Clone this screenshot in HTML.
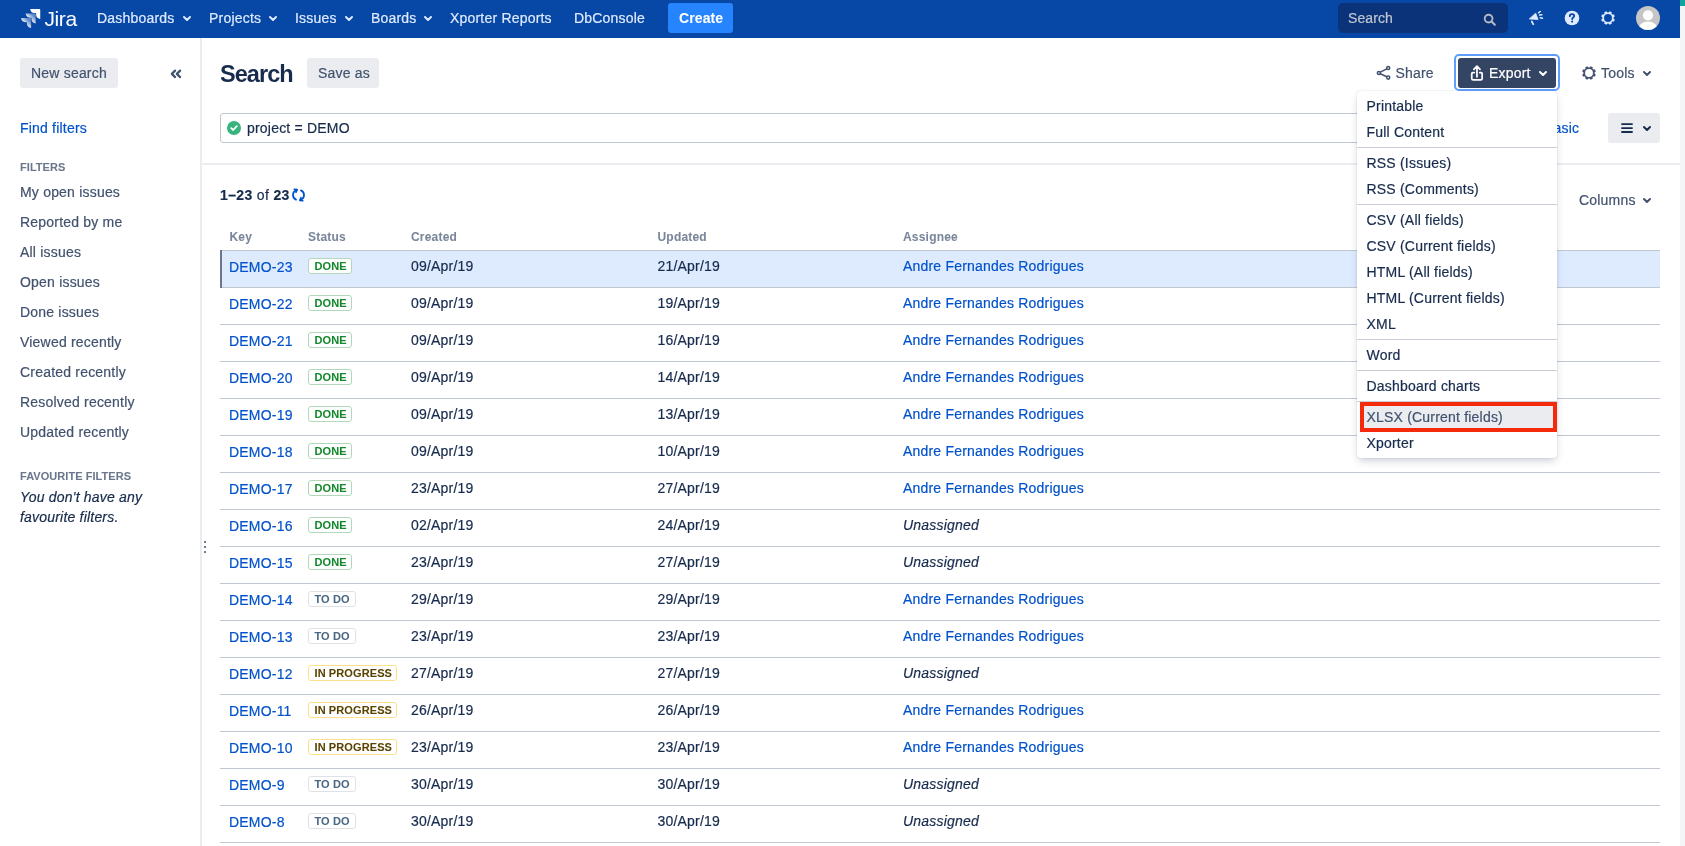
<!DOCTYPE html>
<html><head><meta charset="utf-8">
<style>
*{box-sizing:border-box;margin:0;padding:0}
html,body{width:1685px;height:846px;overflow:hidden;background:#fff}
body{font-family:"Liberation Sans",sans-serif;font-size:14px;color:#172b4d;position:relative}
.a{position:absolute;white-space:nowrap;line-height:16px}
#root{position:absolute;left:0;top:0;width:1685px;height:846px;will-change:transform;-webkit-text-stroke:0.2px currentColor}
svg.a{line-height:0;display:block}
b{font-weight:bold}
</style></head><body><div id="root">
<div class="a" style="left:0px;top:0px;width:1680px;height:38px;background:#0747a6;"></div>
<div class="a" style="left:1680px;top:0px;width:5px;height:846px;background:#f4f5f7;"></div>
<div class="a" style="left:1680px;top:0px;width:5px;height:6px;background:#12a39c;"></div>
<svg class="a" style="left:18.6px;top:5.9px" width="23.7" height="23.7" viewBox="0 0 32 32">
<defs><linearGradient id="lg1" x1="0.9" y1="0.1" x2="0.35" y2="0.65"><stop offset="0.2" stop-color="#fff" stop-opacity="0.35"/><stop offset="1" stop-color="#fff"/></linearGradient></defs>
<path d="M27.6 4H15.2c0 3.1 2.5 5.6 5.6 5.6h2.3v2.2c0 3.1 2.5 5.6 5.6 5.6V5.1c0-.6-.5-1.1-1.1-1.1z" fill="#fff"/>
<path d="M21.5 10.2H9.1c0 3.1 2.5 5.6 5.6 5.6H17V18c0 3.1 2.5 5.6 5.6 5.6V11.3c0-.6-.5-1.1-1.1-1.1z" fill="url(#lg1)"/>
<path d="M15.3 16.3H2.9c0 3.1 2.5 5.6 5.6 5.6h2.3v2.2c0 3.1 2.5 5.6 5.6 5.6V17.4c0-.6-.5-1.1-1.1-1.1z" fill="url(#lg1)"/>
</svg>
<div class="a" style="left:44.5px;top:7px;font-size:21px;line-height:24px;color:#fff;letter-spacing:-0.4px;-webkit-text-stroke:0">Jira</div>
<div class="a" style="left:97px;top:10px;font-size:14px;color:#deebff;font-weight:normal;font-style:normal;letter-spacing:0.2px;">Dashboards</div>
<div class="a" style="left:209px;top:10px;font-size:14px;color:#deebff;font-weight:normal;font-style:normal;letter-spacing:0.2px;">Projects</div>
<div class="a" style="left:295px;top:10px;font-size:14px;color:#deebff;font-weight:normal;font-style:normal;letter-spacing:0.2px;">Issues</div>
<div class="a" style="left:371px;top:10px;font-size:14px;color:#deebff;font-weight:normal;font-style:normal;letter-spacing:0.2px;">Boards</div>
<div class="a" style="left:450px;top:10px;font-size:14px;color:#deebff;font-weight:normal;font-style:normal;letter-spacing:0.2px;">Xporter Reports</div>
<div class="a" style="left:574px;top:10px;font-size:14px;color:#deebff;font-weight:normal;font-style:normal;letter-spacing:0.2px;">DbConsole</div>
<svg class="a" style="left:182px;top:14.5px" width="10" height="7" viewBox="-1 -1 10 7"><path d="M1.0 1.0 L4.0 4.0 L7.0 1.0" fill="none" stroke="#deebff" stroke-width="2" stroke-linecap="round" stroke-linejoin="round"/></svg>
<svg class="a" style="left:268px;top:14.5px" width="10" height="7" viewBox="-1 -1 10 7"><path d="M1.0 1.0 L4.0 4.0 L7.0 1.0" fill="none" stroke="#deebff" stroke-width="2" stroke-linecap="round" stroke-linejoin="round"/></svg>
<svg class="a" style="left:344px;top:14.5px" width="10" height="7" viewBox="-1 -1 10 7"><path d="M1.0 1.0 L4.0 4.0 L7.0 1.0" fill="none" stroke="#deebff" stroke-width="2" stroke-linecap="round" stroke-linejoin="round"/></svg>
<svg class="a" style="left:423px;top:14.5px" width="10" height="7" viewBox="-1 -1 10 7"><path d="M1.0 1.0 L4.0 4.0 L7.0 1.0" fill="none" stroke="#deebff" stroke-width="2" stroke-linecap="round" stroke-linejoin="round"/></svg>
<div class="a" style="left:668px;top:3px;width:65px;height:30px;background:#2684ff;border-radius:3px"></div>
<div class="a" style="left:679px;top:10px;font-size:14px;color:#fff;font-weight:bold;font-style:normal;letter-spacing:0.1px;-webkit-text-stroke:0.05px currentColor;">Create</div>
<div class="a" style="left:1338px;top:3px;width:170px;height:30px;background:#0a337a;border-radius:5px"></div>
<div class="a" style="left:1348px;top:10px;font-size:14px;color:#c1c7d0;font-weight:normal;font-style:normal;letter-spacing:0.1px;">Search</div>
<svg class="a" style="left:1483px;top:13px" width="14" height="14" viewBox="0 0 14 14"><circle cx="5.6" cy="5.6" r="3.9" fill="none" stroke="#b3bac5" stroke-width="1.9"/><path d="M8.5 8.5 L11.8 11.8" stroke="#b3bac5" stroke-width="2.1" stroke-linecap="round"/></svg>
<svg class="a" style="left:1526px;top:9px" width="18" height="18" viewBox="0 0 18 18"><path d="M3.3 9.9 L9.7 4.2 L12.1 10.5 Z" fill="#deebff" stroke="#deebff" stroke-width="0.8" stroke-linejoin="round"/><path d="M5.8 12.5 L7.3 15.3" stroke="#deebff" stroke-width="1.7" stroke-linecap="round"/><path d="M12.5 3.8 L14.3 2.5 M13.6 6.1 L15.9 5.8 M14.2 8.7 L16.5 9.2" stroke="#deebff" stroke-width="1.5" stroke-linecap="round"/></svg>
<svg class="a" style="left:1564px;top:10px" width="16" height="16" viewBox="0 0 16 16"><circle cx="8" cy="8" r="7.3" fill="#deebff"/><path d="M5.8 6.2 C5.8 4.8 6.8 4.1 8 4.1 C9.3 4.1 10.2 4.9 10.2 6 C10.2 7.4 8.2 7.6 8.2 9" fill="none" stroke="#0747a6" stroke-width="1.8" stroke-linecap="round"/><circle cx="8.1" cy="11.6" r="1.05" fill="#0747a6"/></svg>
<svg class="a" style="left:1600px;top:10px" width="16" height="16" viewBox="0 0 16 16"><circle cx="8" cy="8" r="4.85" fill="none" stroke="#deebff" stroke-width="1.8"/><path d="M12.62 9.91 L14.37 10.64 M9.91 12.62 L10.64 14.37 M6.09 12.62 L5.36 14.37 M3.38 9.91 L1.63 10.64 M3.38 6.09 L1.63 5.36 M6.09 3.38 L5.36 1.63 M9.91 3.38 L10.64 1.63 M12.62 6.09 L14.37 5.36 " stroke="#deebff" stroke-width="2.6" stroke-linecap="butt" stroke-linejoin="round"/></svg>
<svg class="a" style="left:1636px;top:6px" width="24" height="24" viewBox="0 0 24 24"><defs><clipPath id="av"><circle cx="12" cy="12" r="12"/></clipPath></defs><circle cx="12" cy="12" r="12" fill="#c6c6c6"/><g clip-path="url(#av)"><circle cx="12" cy="9.3" r="5.1" fill="#fff"/><ellipse cx="12" cy="23" rx="9.5" ry="7.5" fill="#fff"/></g></svg>
<div class="a" style="left:200px;top:38px;width:2px;height:808px;background:#ebecf0;"></div>
<div class="a" style="left:20px;top:58px;width:98px;height:30px;background:#ebecf0;border-radius:3px"></div>
<div class="a" style="left:31px;top:65px;font-size:14px;color:#42526e;font-weight:normal;font-style:normal;letter-spacing:0.2px;">New search</div>
<svg class="a" style="left:170px;top:69px" width="12" height="10" viewBox="0 0 12 10"><path d="M5.1 1.6 L1.8 4.85 L5.1 8.1 M10.1 1.6 L6.8 4.85 L10.1 8.1" fill="none" stroke="#42526e" stroke-width="2.2" stroke-linecap="round" stroke-linejoin="round"/></svg>
<div class="a" style="left:20px;top:120px;font-size:14px;color:#0052cc;font-weight:normal;font-style:normal;letter-spacing:0.2px;">Find filters</div>
<div class="a" style="left:20px;top:159px;font-size:11px;color:#6b778c;font-weight:bold;font-style:normal;letter-spacing:0.05px;-webkit-text-stroke:0.05px currentColor;">FILTERS</div>
<div class="a" style="left:20px;top:184px;font-size:14px;color:#42526e;font-weight:normal;font-style:normal;letter-spacing:0.2px;">My open issues</div>
<div class="a" style="left:20px;top:214px;font-size:14px;color:#42526e;font-weight:normal;font-style:normal;letter-spacing:0.2px;">Reported by me</div>
<div class="a" style="left:20px;top:244px;font-size:14px;color:#42526e;font-weight:normal;font-style:normal;letter-spacing:0.2px;">All issues</div>
<div class="a" style="left:20px;top:274px;font-size:14px;color:#42526e;font-weight:normal;font-style:normal;letter-spacing:0.2px;">Open issues</div>
<div class="a" style="left:20px;top:304px;font-size:14px;color:#42526e;font-weight:normal;font-style:normal;letter-spacing:0.2px;">Done issues</div>
<div class="a" style="left:20px;top:334px;font-size:14px;color:#42526e;font-weight:normal;font-style:normal;letter-spacing:0.2px;">Viewed recently</div>
<div class="a" style="left:20px;top:364px;font-size:14px;color:#42526e;font-weight:normal;font-style:normal;letter-spacing:0.2px;">Created recently</div>
<div class="a" style="left:20px;top:394px;font-size:14px;color:#42526e;font-weight:normal;font-style:normal;letter-spacing:0.2px;">Resolved recently</div>
<div class="a" style="left:20px;top:424px;font-size:14px;color:#42526e;font-weight:normal;font-style:normal;letter-spacing:0.2px;">Updated recently</div>
<div class="a" style="left:20px;top:468px;font-size:11px;color:#6b778c;font-weight:bold;font-style:normal;letter-spacing:0.05px;-webkit-text-stroke:0.05px currentColor;">FAVOURITE FILTERS</div>
<div class="a" style="left:20px;top:489px;font-size:14px;color:#172b4d;font-weight:normal;font-style:italic;letter-spacing:0.2px;">You don't have any</div>
<div class="a" style="left:20px;top:508.5px;font-size:14px;color:#172b4d;font-weight:normal;font-style:italic;letter-spacing:0.2px;">favourite filters.</div>
<div class="a" style="left:204px;top:540.5px;width:2.2px;height:2.2px;background:#42526e;border-radius:1.1px"></div>
<div class="a" style="left:204px;top:545.5px;width:2.2px;height:2.2px;background:#42526e;border-radius:1.1px"></div>
<div class="a" style="left:204px;top:550.5px;width:2.2px;height:2.2px;background:#42526e;border-radius:1.1px"></div>
<div class="a" style="left:220px;top:58.5px;font-size:23.5px;line-height:30px;font-weight:bold;color:#172b4d;letter-spacing:-0.95px;-webkit-text-stroke:0">Search</div>
<div class="a" style="left:307px;top:58px;width:72px;height:30px;background:#ebecf0;border-radius:3px"></div>
<div class="a" style="left:318px;top:65px;font-size:14px;color:#42526e;font-weight:normal;font-style:normal;letter-spacing:0.2px;">Save as</div>
<div class="a" style="left:220px;top:113px;width:1310px;height:30px;background:#fff;border:1px solid #c1c7d0;border-radius:3px"></div>
<svg class="a" style="left:227px;top:121px" width="14" height="14" viewBox="0 0 14 14"><circle cx="7" cy="7" r="7" fill="#36b37e"/><path d="M4.2 7.2 L6.2 9 L9.8 5.2" fill="none" stroke="#fff" stroke-width="1.8" stroke-linecap="round" stroke-linejoin="round"/></svg>
<div class="a" style="left:247px;top:120px;font-size:14px;color:#172b4d;font-weight:normal;font-style:normal;letter-spacing:0.2px;">project = DEMO</div>
<div class="a" style="left:1544px;top:120px;font-size:14px;color:#0052cc;font-weight:normal;font-style:normal;letter-spacing:0.2px;">Basic</div>
<div class="a" style="left:1608px;top:113px;width:52px;height:30px;background:#ebecf0;border-radius:3px"></div>
<svg class="a" style="left:1621px;top:122px" width="12" height="12" viewBox="0 0 12 12"><path d="M1 2.1 H11 M1 6.1 H11 M1 10 H11" stroke="#172b4d" stroke-width="1.9" stroke-linecap="round"/></svg>
<svg class="a" style="left:1642px;top:124.5px" width="10" height="7" viewBox="-1 -1 10 7"><path d="M1.0 1.0 L4.0 4.0 L7.0 1.0" fill="none" stroke="#172b4d" stroke-width="2" stroke-linecap="round" stroke-linejoin="round"/></svg>
<div class="a" style="left:202px;top:163px;width:1478px;height:2px;background:#ebecf0;"></div>
<svg class="a" style="left:1376px;top:65px" width="15" height="16" viewBox="0 0 15 16"><circle cx="12.2" cy="3" r="1.55" fill="none" stroke="#42526e" stroke-width="1.5"/><circle cx="2.9" cy="8" r="1.55" fill="none" stroke="#42526e" stroke-width="1.5"/><circle cx="12.2" cy="12.6" r="1.55" fill="none" stroke="#42526e" stroke-width="1.5"/><path d="M4.3 7.2 L10.8 3.8 M4.3 8.8 L10.8 11.8" stroke="#42526e" stroke-width="1.5"/></svg>
<div class="a" style="left:1395.5px;top:65px;font-size:14px;color:#42526e;font-weight:normal;font-style:normal;letter-spacing:0.2px;">Share</div>
<div class="a" style="left:1454px;top:54px;width:106px;height:37px;background:#fff;border:2.6px solid #5f9eff;border-radius:5px"></div>
<div class="a" style="left:1458px;top:58px;width:98px;height:30px;background:#344563;border-radius:3px"></div>
<svg class="a" style="left:1469px;top:63px" width="16" height="19" viewBox="0 0 16 19"><path d="M5.3 9.55 H3.9 Q2.75 9.55 2.75 10.7 V15.5 Q2.75 16.95 4.2 16.95 H11.7 Q13.15 16.95 13.15 15.5 V10.7 Q13.15 9.55 12 9.55 H10.7" fill="none" stroke="#fff" stroke-width="1.75" stroke-linecap="round"/><path d="M7.95 13.8 V3.4 M4.9 6.4 L7.95 3.1 L11 6.4" fill="none" stroke="#fff" stroke-width="1.75" stroke-linecap="round" stroke-linejoin="round"/></svg>
<div class="a" style="left:1489px;top:65px;font-size:14px;color:#fff;font-weight:normal;font-style:normal;letter-spacing:0.2px;">Export</div>
<svg class="a" style="left:1538px;top:69.5px" width="10" height="7" viewBox="-1 -1 10 7"><path d="M1.0 1.0 L4.0 4.0 L7.0 1.0" fill="none" stroke="#fff" stroke-width="2" stroke-linecap="round" stroke-linejoin="round"/></svg>
<svg class="a" style="left:1581px;top:65px" width="16" height="16" viewBox="0 0 16 16"><circle cx="8" cy="8" r="4.85" fill="none" stroke="#42526e" stroke-width="1.8"/><path d="M12.62 9.91 L14.37 10.64 M9.91 12.62 L10.64 14.37 M6.09 12.62 L5.36 14.37 M3.38 9.91 L1.63 10.64 M3.38 6.09 L1.63 5.36 M6.09 3.38 L5.36 1.63 M9.91 3.38 L10.64 1.63 M12.62 6.09 L14.37 5.36 " stroke="#42526e" stroke-width="2.6" stroke-linecap="butt" stroke-linejoin="round"/></svg>
<div class="a" style="left:1601px;top:65px;font-size:14px;color:#42526e;font-weight:normal;font-style:normal;letter-spacing:0.2px;">Tools</div>
<svg class="a" style="left:1642px;top:69.5px" width="10" height="7" viewBox="-1 -1 10 7"><path d="M1.0 1.0 L4.0 4.0 L7.0 1.0" fill="none" stroke="#42526e" stroke-width="2" stroke-linecap="round" stroke-linejoin="round"/></svg>
<div class="a" style="left:220px;top:187px;font-size:14px;color:#172b4d;letter-spacing:0.35px"><b>1–23</b> of <b>23</b></div>
<svg class="a" style="left:291px;top:188px" width="15" height="14" viewBox="0 0 15 14"><path d="M5.5 2.2 C3.3 3 2 5 2 7 C2 9 3.2 10.8 5 11.6" fill="none" stroke="#0052cc" stroke-width="1.8" stroke-linecap="round"/><path d="M3.2 1.2 L6.2 1.6 L5 4.3" fill="none" stroke="#0052cc" stroke-width="1.6" stroke-linecap="round" stroke-linejoin="round"/><path d="M9.5 11.8 C11.7 11 13 9 13 7 C13 5 11.8 3.2 10 2.4" fill="none" stroke="#0052cc" stroke-width="1.8" stroke-linecap="round"/><path d="M11.8 12.8 L8.8 12.4 L10 9.7" fill="none" stroke="#0052cc" stroke-width="1.6" stroke-linecap="round" stroke-linejoin="round"/></svg>
<div class="a" style="left:1579px;top:192px;font-size:14px;color:#42526e;font-weight:normal;font-style:normal;letter-spacing:0.2px;">Columns</div>
<svg class="a" style="left:1642px;top:197px" width="10" height="7" viewBox="-1 -1 10 7"><path d="M1.0 1.0 L4.0 4.0 L7.0 1.0" fill="none" stroke="#42526e" stroke-width="2" stroke-linecap="round" stroke-linejoin="round"/></svg>
<div class="a" style="left:229.5px;top:229px;font-size:12px;color:#7a869a;font-weight:bold;font-style:normal;letter-spacing:0.2px;-webkit-text-stroke:0.05px currentColor;">Key</div>
<div class="a" style="left:308px;top:229px;font-size:12px;color:#7a869a;font-weight:bold;font-style:normal;letter-spacing:0.2px;-webkit-text-stroke:0.05px currentColor;">Status</div>
<div class="a" style="left:411px;top:229px;font-size:12px;color:#7a869a;font-weight:bold;font-style:normal;letter-spacing:0.2px;-webkit-text-stroke:0.05px currentColor;">Created</div>
<div class="a" style="left:657.5px;top:229px;font-size:12px;color:#7a869a;font-weight:bold;font-style:normal;letter-spacing:0.2px;-webkit-text-stroke:0.05px currentColor;">Updated</div>
<div class="a" style="left:903px;top:229px;font-size:12px;color:#7a869a;font-weight:bold;font-style:normal;letter-spacing:0.2px;-webkit-text-stroke:0.05px currentColor;">Assignee</div>
<div class="a" style="left:220px;top:250px;width:1440px;height:37px;background:#deebff;"></div>
<div class="a" style="left:220px;top:250px;width:1440px;height:1px;background:#c1c7d0;"></div>
<div class="a" style="left:220px;top:287px;width:1440px;height:1px;background:#c1c7d0;"></div>
<div class="a" style="left:220px;top:324px;width:1440px;height:1px;background:#c1c7d0;"></div>
<div class="a" style="left:220px;top:361px;width:1440px;height:1px;background:#c1c7d0;"></div>
<div class="a" style="left:220px;top:398px;width:1440px;height:1px;background:#c1c7d0;"></div>
<div class="a" style="left:220px;top:435px;width:1440px;height:1px;background:#c1c7d0;"></div>
<div class="a" style="left:220px;top:472px;width:1440px;height:1px;background:#c1c7d0;"></div>
<div class="a" style="left:220px;top:509px;width:1440px;height:1px;background:#c1c7d0;"></div>
<div class="a" style="left:220px;top:546px;width:1440px;height:1px;background:#c1c7d0;"></div>
<div class="a" style="left:220px;top:583px;width:1440px;height:1px;background:#c1c7d0;"></div>
<div class="a" style="left:220px;top:620px;width:1440px;height:1px;background:#c1c7d0;"></div>
<div class="a" style="left:220px;top:657px;width:1440px;height:1px;background:#c1c7d0;"></div>
<div class="a" style="left:220px;top:694px;width:1440px;height:1px;background:#c1c7d0;"></div>
<div class="a" style="left:220px;top:731px;width:1440px;height:1px;background:#c1c7d0;"></div>
<div class="a" style="left:220px;top:768px;width:1440px;height:1px;background:#c1c7d0;"></div>
<div class="a" style="left:220px;top:805px;width:1440px;height:1px;background:#c1c7d0;"></div>
<div class="a" style="left:220px;top:842px;width:1440px;height:1px;background:#c1c7d0;"></div>
<div class="a" style="left:220px;top:250px;width:2px;height:38px;background:#6b778c;"></div>
<div class="a" style="left:229px;top:259px;font-size:14px;color:#0052cc;font-weight:normal;font-style:normal;letter-spacing:0.2px;">DEMO-23</div>
<div class="a" style="left:308px;top:258px;width:44px;height:16px;border:1px solid #b2d8b9;border-radius:3px;background:#fff"></div>
<div class="a" style="left:314.5px;top:258px;font-size:11px;color:#14892c;font-weight:bold;font-style:normal;letter-spacing:0.1px;-webkit-text-stroke:0.05px currentColor;">DONE</div>
<div class="a" style="left:411px;top:258px;font-size:14px;color:#172b4d;font-weight:normal;font-style:normal;letter-spacing:0.2px;">09/Apr/19</div>
<div class="a" style="left:657.5px;top:258px;font-size:14px;color:#172b4d;font-weight:normal;font-style:normal;letter-spacing:0.2px;">21/Apr/19</div>
<div class="a" style="left:903px;top:258px;font-size:14px;color:#0052cc;font-weight:normal;font-style:normal;letter-spacing:0.2px;">Andre Fernandes Rodrigues</div>
<div class="a" style="left:229px;top:296px;font-size:14px;color:#0052cc;font-weight:normal;font-style:normal;letter-spacing:0.2px;">DEMO-22</div>
<div class="a" style="left:308px;top:295px;width:44px;height:16px;border:1px solid #b2d8b9;border-radius:3px;background:#fff"></div>
<div class="a" style="left:314.5px;top:295px;font-size:11px;color:#14892c;font-weight:bold;font-style:normal;letter-spacing:0.1px;-webkit-text-stroke:0.05px currentColor;">DONE</div>
<div class="a" style="left:411px;top:295px;font-size:14px;color:#172b4d;font-weight:normal;font-style:normal;letter-spacing:0.2px;">09/Apr/19</div>
<div class="a" style="left:657.5px;top:295px;font-size:14px;color:#172b4d;font-weight:normal;font-style:normal;letter-spacing:0.2px;">19/Apr/19</div>
<div class="a" style="left:903px;top:295px;font-size:14px;color:#0052cc;font-weight:normal;font-style:normal;letter-spacing:0.2px;">Andre Fernandes Rodrigues</div>
<div class="a" style="left:229px;top:333px;font-size:14px;color:#0052cc;font-weight:normal;font-style:normal;letter-spacing:0.2px;">DEMO-21</div>
<div class="a" style="left:308px;top:332px;width:44px;height:16px;border:1px solid #b2d8b9;border-radius:3px;background:#fff"></div>
<div class="a" style="left:314.5px;top:332px;font-size:11px;color:#14892c;font-weight:bold;font-style:normal;letter-spacing:0.1px;-webkit-text-stroke:0.05px currentColor;">DONE</div>
<div class="a" style="left:411px;top:332px;font-size:14px;color:#172b4d;font-weight:normal;font-style:normal;letter-spacing:0.2px;">09/Apr/19</div>
<div class="a" style="left:657.5px;top:332px;font-size:14px;color:#172b4d;font-weight:normal;font-style:normal;letter-spacing:0.2px;">16/Apr/19</div>
<div class="a" style="left:903px;top:332px;font-size:14px;color:#0052cc;font-weight:normal;font-style:normal;letter-spacing:0.2px;">Andre Fernandes Rodrigues</div>
<div class="a" style="left:229px;top:370px;font-size:14px;color:#0052cc;font-weight:normal;font-style:normal;letter-spacing:0.2px;">DEMO-20</div>
<div class="a" style="left:308px;top:369px;width:44px;height:16px;border:1px solid #b2d8b9;border-radius:3px;background:#fff"></div>
<div class="a" style="left:314.5px;top:369px;font-size:11px;color:#14892c;font-weight:bold;font-style:normal;letter-spacing:0.1px;-webkit-text-stroke:0.05px currentColor;">DONE</div>
<div class="a" style="left:411px;top:369px;font-size:14px;color:#172b4d;font-weight:normal;font-style:normal;letter-spacing:0.2px;">09/Apr/19</div>
<div class="a" style="left:657.5px;top:369px;font-size:14px;color:#172b4d;font-weight:normal;font-style:normal;letter-spacing:0.2px;">14/Apr/19</div>
<div class="a" style="left:903px;top:369px;font-size:14px;color:#0052cc;font-weight:normal;font-style:normal;letter-spacing:0.2px;">Andre Fernandes Rodrigues</div>
<div class="a" style="left:229px;top:407px;font-size:14px;color:#0052cc;font-weight:normal;font-style:normal;letter-spacing:0.2px;">DEMO-19</div>
<div class="a" style="left:308px;top:406px;width:44px;height:16px;border:1px solid #b2d8b9;border-radius:3px;background:#fff"></div>
<div class="a" style="left:314.5px;top:406px;font-size:11px;color:#14892c;font-weight:bold;font-style:normal;letter-spacing:0.1px;-webkit-text-stroke:0.05px currentColor;">DONE</div>
<div class="a" style="left:411px;top:406px;font-size:14px;color:#172b4d;font-weight:normal;font-style:normal;letter-spacing:0.2px;">09/Apr/19</div>
<div class="a" style="left:657.5px;top:406px;font-size:14px;color:#172b4d;font-weight:normal;font-style:normal;letter-spacing:0.2px;">13/Apr/19</div>
<div class="a" style="left:903px;top:406px;font-size:14px;color:#0052cc;font-weight:normal;font-style:normal;letter-spacing:0.2px;">Andre Fernandes Rodrigues</div>
<div class="a" style="left:229px;top:444px;font-size:14px;color:#0052cc;font-weight:normal;font-style:normal;letter-spacing:0.2px;">DEMO-18</div>
<div class="a" style="left:308px;top:443px;width:44px;height:16px;border:1px solid #b2d8b9;border-radius:3px;background:#fff"></div>
<div class="a" style="left:314.5px;top:443px;font-size:11px;color:#14892c;font-weight:bold;font-style:normal;letter-spacing:0.1px;-webkit-text-stroke:0.05px currentColor;">DONE</div>
<div class="a" style="left:411px;top:443px;font-size:14px;color:#172b4d;font-weight:normal;font-style:normal;letter-spacing:0.2px;">09/Apr/19</div>
<div class="a" style="left:657.5px;top:443px;font-size:14px;color:#172b4d;font-weight:normal;font-style:normal;letter-spacing:0.2px;">10/Apr/19</div>
<div class="a" style="left:903px;top:443px;font-size:14px;color:#0052cc;font-weight:normal;font-style:normal;letter-spacing:0.2px;">Andre Fernandes Rodrigues</div>
<div class="a" style="left:229px;top:481px;font-size:14px;color:#0052cc;font-weight:normal;font-style:normal;letter-spacing:0.2px;">DEMO-17</div>
<div class="a" style="left:308px;top:480px;width:44px;height:16px;border:1px solid #b2d8b9;border-radius:3px;background:#fff"></div>
<div class="a" style="left:314.5px;top:480px;font-size:11px;color:#14892c;font-weight:bold;font-style:normal;letter-spacing:0.1px;-webkit-text-stroke:0.05px currentColor;">DONE</div>
<div class="a" style="left:411px;top:480px;font-size:14px;color:#172b4d;font-weight:normal;font-style:normal;letter-spacing:0.2px;">23/Apr/19</div>
<div class="a" style="left:657.5px;top:480px;font-size:14px;color:#172b4d;font-weight:normal;font-style:normal;letter-spacing:0.2px;">27/Apr/19</div>
<div class="a" style="left:903px;top:480px;font-size:14px;color:#0052cc;font-weight:normal;font-style:normal;letter-spacing:0.2px;">Andre Fernandes Rodrigues</div>
<div class="a" style="left:229px;top:518px;font-size:14px;color:#0052cc;font-weight:normal;font-style:normal;letter-spacing:0.2px;">DEMO-16</div>
<div class="a" style="left:308px;top:517px;width:44px;height:16px;border:1px solid #b2d8b9;border-radius:3px;background:#fff"></div>
<div class="a" style="left:314.5px;top:517px;font-size:11px;color:#14892c;font-weight:bold;font-style:normal;letter-spacing:0.1px;-webkit-text-stroke:0.05px currentColor;">DONE</div>
<div class="a" style="left:411px;top:517px;font-size:14px;color:#172b4d;font-weight:normal;font-style:normal;letter-spacing:0.2px;">02/Apr/19</div>
<div class="a" style="left:657.5px;top:517px;font-size:14px;color:#172b4d;font-weight:normal;font-style:normal;letter-spacing:0.2px;">24/Apr/19</div>
<div class="a" style="left:903px;top:517px;font-size:14px;color:#172b4d;font-weight:normal;font-style:italic;letter-spacing:0.2px;">Unassigned</div>
<div class="a" style="left:229px;top:555px;font-size:14px;color:#0052cc;font-weight:normal;font-style:normal;letter-spacing:0.2px;">DEMO-15</div>
<div class="a" style="left:308px;top:554px;width:44px;height:16px;border:1px solid #b2d8b9;border-radius:3px;background:#fff"></div>
<div class="a" style="left:314.5px;top:554px;font-size:11px;color:#14892c;font-weight:bold;font-style:normal;letter-spacing:0.1px;-webkit-text-stroke:0.05px currentColor;">DONE</div>
<div class="a" style="left:411px;top:554px;font-size:14px;color:#172b4d;font-weight:normal;font-style:normal;letter-spacing:0.2px;">23/Apr/19</div>
<div class="a" style="left:657.5px;top:554px;font-size:14px;color:#172b4d;font-weight:normal;font-style:normal;letter-spacing:0.2px;">27/Apr/19</div>
<div class="a" style="left:903px;top:554px;font-size:14px;color:#172b4d;font-weight:normal;font-style:italic;letter-spacing:0.2px;">Unassigned</div>
<div class="a" style="left:229px;top:592px;font-size:14px;color:#0052cc;font-weight:normal;font-style:normal;letter-spacing:0.2px;">DEMO-14</div>
<div class="a" style="left:308px;top:591px;width:48px;height:16px;border:1px solid #dfe1e6;border-radius:3px;background:#fff"></div>
<div class="a" style="left:314.5px;top:591px;font-size:11px;color:#4a6785;font-weight:bold;font-style:normal;letter-spacing:0.1px;-webkit-text-stroke:0.05px currentColor;">TO DO</div>
<div class="a" style="left:411px;top:591px;font-size:14px;color:#172b4d;font-weight:normal;font-style:normal;letter-spacing:0.2px;">29/Apr/19</div>
<div class="a" style="left:657.5px;top:591px;font-size:14px;color:#172b4d;font-weight:normal;font-style:normal;letter-spacing:0.2px;">29/Apr/19</div>
<div class="a" style="left:903px;top:591px;font-size:14px;color:#0052cc;font-weight:normal;font-style:normal;letter-spacing:0.2px;">Andre Fernandes Rodrigues</div>
<div class="a" style="left:229px;top:629px;font-size:14px;color:#0052cc;font-weight:normal;font-style:normal;letter-spacing:0.2px;">DEMO-13</div>
<div class="a" style="left:308px;top:628px;width:48px;height:16px;border:1px solid #dfe1e6;border-radius:3px;background:#fff"></div>
<div class="a" style="left:314.5px;top:628px;font-size:11px;color:#4a6785;font-weight:bold;font-style:normal;letter-spacing:0.1px;-webkit-text-stroke:0.05px currentColor;">TO DO</div>
<div class="a" style="left:411px;top:628px;font-size:14px;color:#172b4d;font-weight:normal;font-style:normal;letter-spacing:0.2px;">23/Apr/19</div>
<div class="a" style="left:657.5px;top:628px;font-size:14px;color:#172b4d;font-weight:normal;font-style:normal;letter-spacing:0.2px;">23/Apr/19</div>
<div class="a" style="left:903px;top:628px;font-size:14px;color:#0052cc;font-weight:normal;font-style:normal;letter-spacing:0.2px;">Andre Fernandes Rodrigues</div>
<div class="a" style="left:229px;top:666px;font-size:14px;color:#0052cc;font-weight:normal;font-style:normal;letter-spacing:0.2px;">DEMO-12</div>
<div class="a" style="left:308px;top:665px;width:89px;height:16px;border:1px solid #ffe08a;border-radius:3px;background:#fff"></div>
<div class="a" style="left:314.5px;top:665px;font-size:11px;color:#594300;font-weight:bold;font-style:normal;letter-spacing:0.1px;-webkit-text-stroke:0.05px currentColor;">IN PROGRESS</div>
<div class="a" style="left:411px;top:665px;font-size:14px;color:#172b4d;font-weight:normal;font-style:normal;letter-spacing:0.2px;">27/Apr/19</div>
<div class="a" style="left:657.5px;top:665px;font-size:14px;color:#172b4d;font-weight:normal;font-style:normal;letter-spacing:0.2px;">27/Apr/19</div>
<div class="a" style="left:903px;top:665px;font-size:14px;color:#172b4d;font-weight:normal;font-style:italic;letter-spacing:0.2px;">Unassigned</div>
<div class="a" style="left:229px;top:703px;font-size:14px;color:#0052cc;font-weight:normal;font-style:normal;letter-spacing:0.2px;">DEMO-11</div>
<div class="a" style="left:308px;top:702px;width:89px;height:16px;border:1px solid #ffe08a;border-radius:3px;background:#fff"></div>
<div class="a" style="left:314.5px;top:702px;font-size:11px;color:#594300;font-weight:bold;font-style:normal;letter-spacing:0.1px;-webkit-text-stroke:0.05px currentColor;">IN PROGRESS</div>
<div class="a" style="left:411px;top:702px;font-size:14px;color:#172b4d;font-weight:normal;font-style:normal;letter-spacing:0.2px;">26/Apr/19</div>
<div class="a" style="left:657.5px;top:702px;font-size:14px;color:#172b4d;font-weight:normal;font-style:normal;letter-spacing:0.2px;">26/Apr/19</div>
<div class="a" style="left:903px;top:702px;font-size:14px;color:#0052cc;font-weight:normal;font-style:normal;letter-spacing:0.2px;">Andre Fernandes Rodrigues</div>
<div class="a" style="left:229px;top:740px;font-size:14px;color:#0052cc;font-weight:normal;font-style:normal;letter-spacing:0.2px;">DEMO-10</div>
<div class="a" style="left:308px;top:739px;width:89px;height:16px;border:1px solid #ffe08a;border-radius:3px;background:#fff"></div>
<div class="a" style="left:314.5px;top:739px;font-size:11px;color:#594300;font-weight:bold;font-style:normal;letter-spacing:0.1px;-webkit-text-stroke:0.05px currentColor;">IN PROGRESS</div>
<div class="a" style="left:411px;top:739px;font-size:14px;color:#172b4d;font-weight:normal;font-style:normal;letter-spacing:0.2px;">23/Apr/19</div>
<div class="a" style="left:657.5px;top:739px;font-size:14px;color:#172b4d;font-weight:normal;font-style:normal;letter-spacing:0.2px;">23/Apr/19</div>
<div class="a" style="left:903px;top:739px;font-size:14px;color:#0052cc;font-weight:normal;font-style:normal;letter-spacing:0.2px;">Andre Fernandes Rodrigues</div>
<div class="a" style="left:229px;top:777px;font-size:14px;color:#0052cc;font-weight:normal;font-style:normal;letter-spacing:0.2px;">DEMO-9</div>
<div class="a" style="left:308px;top:776px;width:48px;height:16px;border:1px solid #dfe1e6;border-radius:3px;background:#fff"></div>
<div class="a" style="left:314.5px;top:776px;font-size:11px;color:#4a6785;font-weight:bold;font-style:normal;letter-spacing:0.1px;-webkit-text-stroke:0.05px currentColor;">TO DO</div>
<div class="a" style="left:411px;top:776px;font-size:14px;color:#172b4d;font-weight:normal;font-style:normal;letter-spacing:0.2px;">30/Apr/19</div>
<div class="a" style="left:657.5px;top:776px;font-size:14px;color:#172b4d;font-weight:normal;font-style:normal;letter-spacing:0.2px;">30/Apr/19</div>
<div class="a" style="left:903px;top:776px;font-size:14px;color:#172b4d;font-weight:normal;font-style:italic;letter-spacing:0.2px;">Unassigned</div>
<div class="a" style="left:229px;top:814px;font-size:14px;color:#0052cc;font-weight:normal;font-style:normal;letter-spacing:0.2px;">DEMO-8</div>
<div class="a" style="left:308px;top:813px;width:48px;height:16px;border:1px solid #dfe1e6;border-radius:3px;background:#fff"></div>
<div class="a" style="left:314.5px;top:813px;font-size:11px;color:#4a6785;font-weight:bold;font-style:normal;letter-spacing:0.1px;-webkit-text-stroke:0.05px currentColor;">TO DO</div>
<div class="a" style="left:411px;top:813px;font-size:14px;color:#172b4d;font-weight:normal;font-style:normal;letter-spacing:0.2px;">30/Apr/19</div>
<div class="a" style="left:657.5px;top:813px;font-size:14px;color:#172b4d;font-weight:normal;font-style:normal;letter-spacing:0.2px;">30/Apr/19</div>
<div class="a" style="left:903px;top:813px;font-size:14px;color:#172b4d;font-weight:normal;font-style:italic;letter-spacing:0.2px;">Unassigned</div>
<div class="a" style="left:1357px;top:90.5px;width:200px;height:367.5px;background:#fff;border-radius:3px;box-shadow:0 4px 8px -2px rgba(9,30,66,0.25),0 0 1px rgba(9,30,66,0.31)"></div>
<div class="a" style="left:1357px;top:147px;width:200px;height:1px;background:#c9ced6;"></div>
<div class="a" style="left:1357px;top:204px;width:200px;height:1px;background:#c9ced6;"></div>
<div class="a" style="left:1357px;top:339px;width:200px;height:1px;background:#c9ced6;"></div>
<div class="a" style="left:1357px;top:370px;width:200px;height:1px;background:#c9ced6;"></div>
<div class="a" style="left:1357px;top:401px;width:200px;height:1px;background:#c9ced6;"></div>
<div class="a" style="left:1360px;top:402px;width:197px;height:30px;background:#ebecf0;border:4px solid #f52a0c"></div>
<div class="a" style="left:1366.5px;top:98px;font-size:14px;color:#172b4d;font-weight:normal;font-style:normal;letter-spacing:0.2px;">Printable</div>
<div class="a" style="left:1366.5px;top:124px;font-size:14px;color:#172b4d;font-weight:normal;font-style:normal;letter-spacing:0.2px;">Full Content</div>
<div class="a" style="left:1366.5px;top:155px;font-size:14px;color:#172b4d;font-weight:normal;font-style:normal;letter-spacing:0.2px;">RSS (Issues)</div>
<div class="a" style="left:1366.5px;top:181px;font-size:14px;color:#172b4d;font-weight:normal;font-style:normal;letter-spacing:0.2px;">RSS (Comments)</div>
<div class="a" style="left:1366.5px;top:212px;font-size:14px;color:#172b4d;font-weight:normal;font-style:normal;letter-spacing:0.2px;">CSV (All fields)</div>
<div class="a" style="left:1366.5px;top:238px;font-size:14px;color:#172b4d;font-weight:normal;font-style:normal;letter-spacing:0.2px;">CSV (Current fields)</div>
<div class="a" style="left:1366.5px;top:264px;font-size:14px;color:#172b4d;font-weight:normal;font-style:normal;letter-spacing:0.2px;">HTML (All fields)</div>
<div class="a" style="left:1366.5px;top:290px;font-size:14px;color:#172b4d;font-weight:normal;font-style:normal;letter-spacing:0.2px;">HTML (Current fields)</div>
<div class="a" style="left:1366.5px;top:316px;font-size:14px;color:#172b4d;font-weight:normal;font-style:normal;letter-spacing:0.2px;">XML</div>
<div class="a" style="left:1366.5px;top:347px;font-size:14px;color:#172b4d;font-weight:normal;font-style:normal;letter-spacing:0.2px;">Word</div>
<div class="a" style="left:1366.5px;top:378px;font-size:14px;color:#172b4d;font-weight:normal;font-style:normal;letter-spacing:0.2px;">Dashboard charts</div>
<div class="a" style="left:1366.5px;top:409px;font-size:14px;color:#42526e;font-weight:normal;font-style:normal;letter-spacing:0.2px;">XLSX (Current fields)</div>
<div class="a" style="left:1366.5px;top:435px;font-size:14px;color:#172b4d;font-weight:normal;font-style:normal;letter-spacing:0.2px;">Xporter</div>
</div></body></html>
